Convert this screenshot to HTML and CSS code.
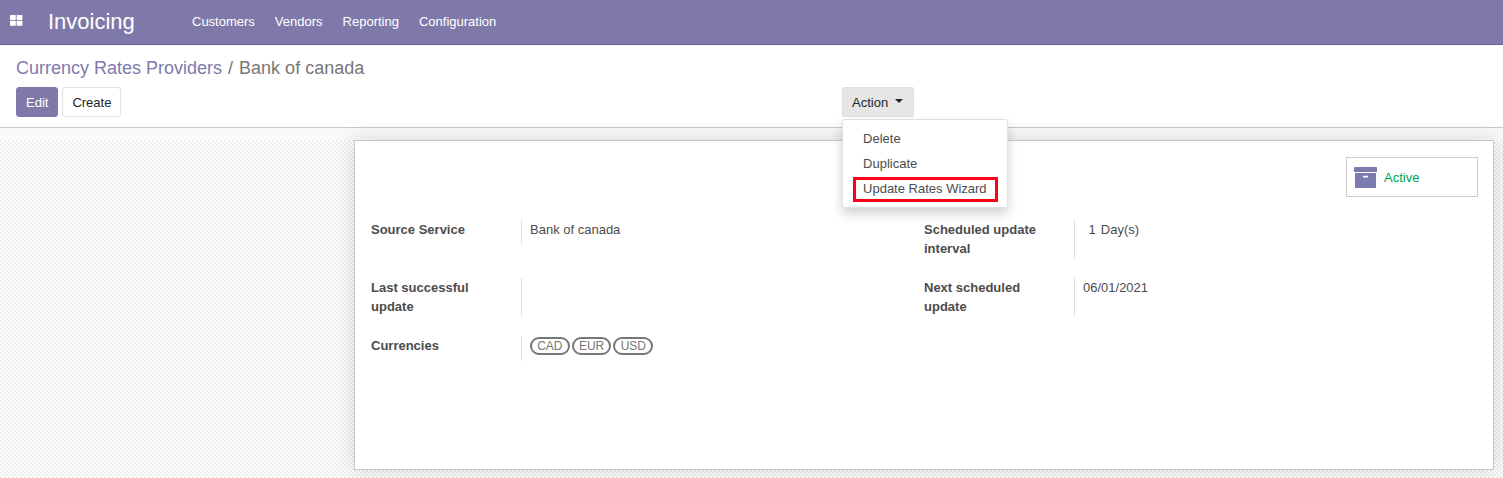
FILE: index.html
```html
<!DOCTYPE html>
<html lang="en">
<head>
<meta charset="utf-8">
<title>Bank of canada - Invoicing</title>
<link rel="stylesheet" href="styles.css">
</head>
<body>
<header class="navbar">
  <a class="apps"><svg width="13" height="11" viewBox="0 0 13 11" fill="#fff"><rect width="5.800" height="5" rx=".7"/><rect x="6.600" width="5.800" height="5" rx=".7"/><rect y="5.700" width="5.800" height="5" rx=".7"/><rect x="6.600" y="5.700" width="5.800" height="5" rx=".7"/></svg></a>
  <a class="brand">Invoicing</a>
  <nav class="menu"><a>Customers</a><a>Vendors</a><a>Reporting</a><a>Configuration</a></nav>
</header>
<section class="control-panel">
  <div class="breadcrumb"><a>Currency Rates Providers</a><span class="sep">/</span><span>Bank of canada</span></div>
  <div class="buttons">
    <button class="btn primary">Edit</button>
    <button class="btn">Create</button>
    <div class="dropdown">
      <button class="btn toggle">Action<span class="caret"></span></button>
      <div class="dropdown-menu"><a>Delete</a><a>Duplicate</a><a class="highlight">Update Rates Wizard</a></div>
    </div>
  </div>
</section>
<main class="content">
  <div class="sheet">
    <div class="stat"><svg width="23" height="21" viewBox="0 0 23 21"><path fill="#7c7bad" fill-rule="evenodd" d="M.8 0h21.400q.8 0 .8.8v4.200H0V.8Q0 0 .8 0ZM1 6h21v14.300q0 .7-.7.7H1.700q-.7 0-.7-.7ZM9.700 8.700q-.9 0-.9.900t.9.900h3.600q.9 0 .9-.9t-.9-.9Z"/></svg><span>Active</span></div>
    <div class="groups">
      <dl class="group">
        <div class="field"><dt>Source Service</dt><dd class="short">Bank of canada</dd></div>
        <div class="field"><dt>Last successful<br>update</dt><dd></dd></div>
        <div class="field"><dt>Currencies</dt><dd class="tags"><span>CAD</span><span>EUR</span><span>USD</span></dd></div>
      </dl>
      <dl class="group">
        <div class="field"><dt>Scheduled update<br>interval</dt><dd class="interval"><span>1</span><span>Day(s)</span></dd></div>
        <div class="field"><dt>Next scheduled<br>update</dt><dd>06/01/2021</dd></div>
      </dl>
    </div>
  </div>
</main>
</body>
</html>
```
FILE: styles.css
```css
* { box-sizing: border-box; }
body {
  margin: 0;
  height: 478px;
  display: flex;
  flex-direction: column;
  overflow: hidden;
  font: 13px/19px "Liberation Sans", Arial, sans-serif;
  color: #4c4c4c;
  background: #f9f9f9;
}
.navbar {
  height: 45px;
  flex: none;
  display: flex;
  align-items: center;
  padding: 0 10px;
  background: #7f79aa;
  border-bottom: 1px solid #5f5e97;
  color: #fff;
}
.apps { width: 38px; display: flex; margin-top: -3px; }
.brand { width: 144px; font-size: 22px; line-height: 44px; }
.menu { display: flex; gap: 20px; margin-top: -2px; }
.control-panel {
  height: 83px;
  flex: none;
  padding: 12px 16px 0;
  background: #fff;
  border-bottom: 1px solid #cacaca;
}
.breadcrumb { font-size: 18px; line-height: 22px; color: #777; }
.breadcrumb a { color: #7c7bad; }
.sep { padding: 0 6px; }
.buttons { display: flex; gap: 4px; margin-top: 8px; }
.btn {
  height: 30px;
  padding: 0 9px;
  font: inherit;
  color: #212529;
  background: #fff;
  border: 1px solid #dee2e6;
  border-radius: 3px;
}
.primary { color: #fff; background: #7f79aa; border-color: #7f79aa; }
.dropdown { position: relative; margin-left: 716.6px; }
.toggle {
  display: flex;
  align-items: center;
  width: 72px;
  background: #e6e6e6;
  border-color: #dfdfdf;
  border-radius: 2px;
}
.caret {
  margin: -3px 0 0 7px;
  border: 4px solid transparent;
  border-top-color: #212529;
  border-bottom: 0;
}
.dropdown-menu {
  position: absolute;
  top: 32px;
  left: 0;
  z-index: 2;
  width: 166px;
  height: 89px;
  padding: 6px 9px 0 10px;
  background: #fff;
  border: 1px solid #dee2e6;
  border-radius: 3px;
  box-shadow: 0 6px 12px rgba(0, 0, 0, .175);
}
.dropdown-menu a { display: block; height: 25px; padding: 3px 10px; white-space: nowrap; }
.dropdown-menu .highlight {
  width: 145px;
  margin-top: 1px;
  padding: 0 7px;
  line-height: 18px;
  border: 3px solid #fc0019;
}
.content {
  height: 350px;
  padding: 12px 9px 8px 354px;
  background: repeating-conic-gradient(#fff 0 25%, #eee 0 50%) 0 12px / 4px 4px;
  position: relative;
}
.content::before {
  content: "";
  position: absolute;
  inset: 0 0 auto;
  height: 12px;
  background: #f9f9f9;
}
.sheet {
  position: relative;
  height: 330px;
  padding: 16px 15px 0 16px;
  background: #fff;
  border: 1px solid #c8c8d3;
  box-shadow: 0 0 20px rgba(0, 0, 0, .14);
}
.stat {
  display: flex;
  align-items: center;
  gap: 7px;
  width: 132px;
  height: 40px;
  margin-left: auto;
  padding-left: 7px;
  border: 1px solid #ccc;
  color: #00a651;
}
.groups { display: grid; grid-template-columns: 553px 1fr; margin-top: 23px; }
.group { display: flex; flex-direction: column; gap: 20px; margin: 0; }
.field { display: flex; min-height: 38px; }
dt { width: 150px; font-weight: bold; }
dd { margin: 0; padding-left: 8px; border-left: 1px solid #ddd; }
.short { height: 24px; }
.tags { display: flex; align-items: flex-start; gap: 2px; height: 25px; padding-top: 1px; }
.tags span {
  height: 18px;
  padding: 0 5.2px;
  border: 2px solid #777;
  border-radius: 9px;
  font-size: 12px;
  line-height: 14px;
  color: #777;
}
.interval { display: flex; gap: 5px; padding-left: 13.6px; }
```
